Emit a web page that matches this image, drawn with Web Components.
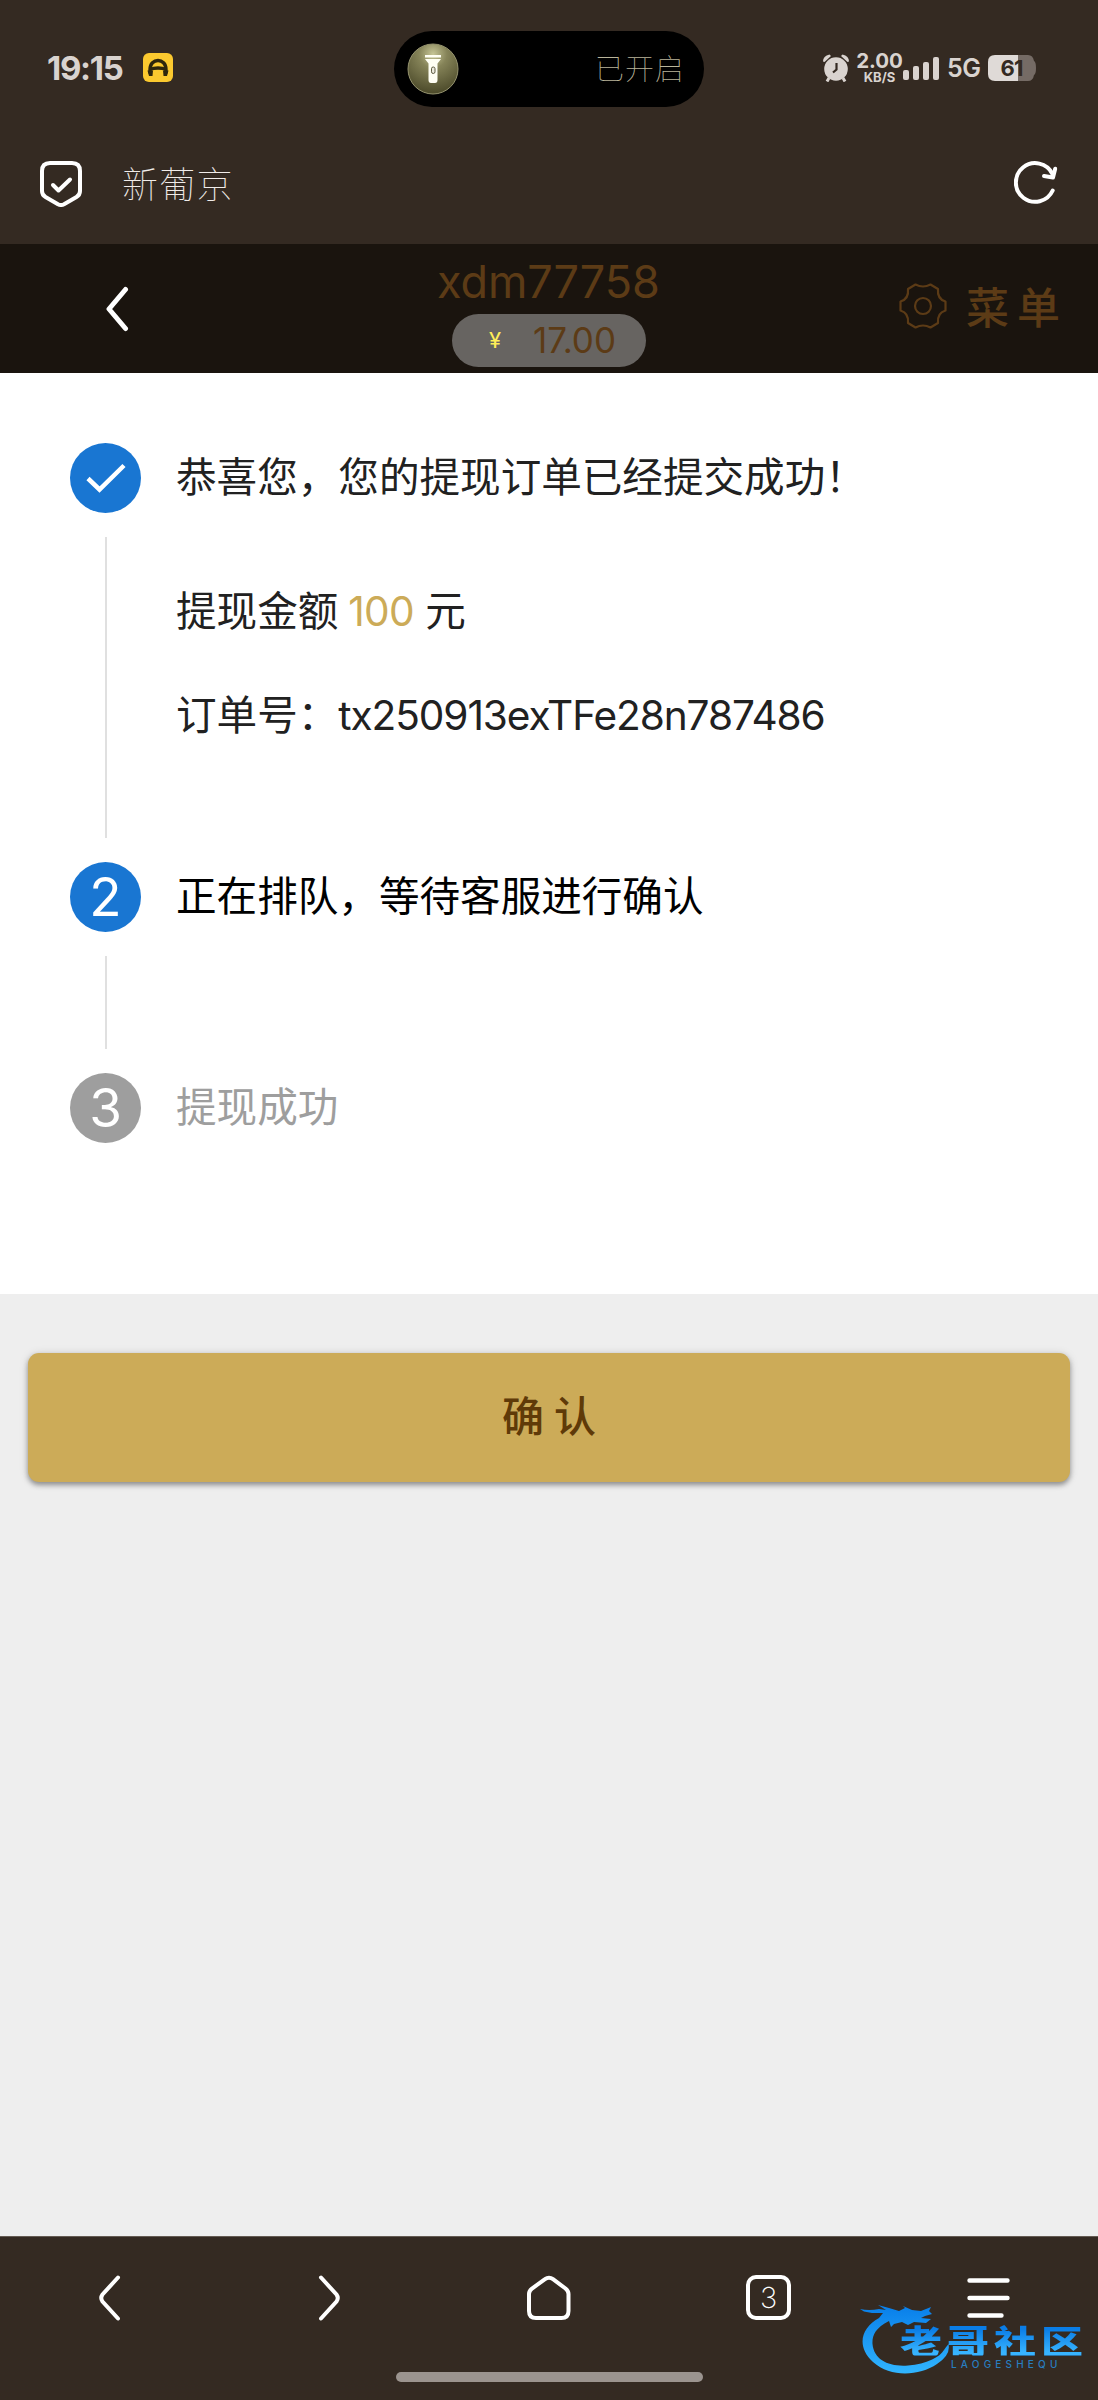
<!DOCTYPE html>
<html lang="zh-CN">
<head>
<meta charset="utf-8">
<title>提现订单</title>
<style>
html,body{margin:0;padding:0}
body{width:1098px;height:2400px;overflow:hidden;background:#eee;font-family:Inter,"Noto Sans CJK SC",sans-serif}
</style>
</head>
<body>
<app-screen></app-screen>
<script>
function define(name, html){
  const t=document.createElement('template');
  t.innerHTML=html;
  customElements.define(name, class extends HTMLElement{
    constructor(){super();this.attachShadow({mode:'open'}).append(t.content.cloneNode(true));}
  });
}

define('status-bar', `<style>
:host{display:flex;height:138px;box-sizing:border-box;padding:0 61px 0 47px;align-items:flex-start;color:#d9d3cf}
svg{display:block;flex:none}
.left{display:flex;align-items:center;width:347px;height:76px;margin-top:30px;gap:19px}
.time{font-size:33px;font-weight:700;letter-spacing:-1.3px;line-height:40px;width:77px;white-space:nowrap}
.island{margin-top:31px;width:310px;height:76px;border-radius:38px;background:#000;display:flex;align-items:center;justify-content:space-between;padding:0 19px 0 13px;box-sizing:border-box}
.island span{font:100 29px/40px "Noto Sans CJK SC",sans-serif;letter-spacing:1px;color:#b9b49a;padding-bottom:4px}
.right{display:flex;align-items:center;margin-left:auto;height:76px;margin-top:30px}
.speed{display:flex;flex-direction:column;align-items:center;margin:-1px 2px 0 8px;width:43px}
.speed b{font-size:20.500px;line-height:18px;letter-spacing:-.1px;font-weight:700}
.speed i{font-style:normal;font-weight:700;font-size:13px;line-height:14px}
.net{font-size:25px;font-weight:600;line-height:30px;margin:0 6px 0 7px;width:35px;letter-spacing:-.4px}
.bat{width:49px;height:26px;display:grid}
.bat>*{grid-area:1/1}
.bat span{font-size:22px;font-weight:700;line-height:26px;color:#342a22;text-align:center;letter-spacing:-1px;width:47px}
</style>
<div class="left"><span class="time">19:15</span>
<svg width="30" height="30" viewBox="0 0 30 30"><rect width="30" height="29" rx="6" fill="#fbc92f"/><path d="M7 20.500V16.500C7 4.500 23 4.500 23 16.500V20.500" fill="none" stroke="#2e260d" stroke-width="3.400"/><path d="M6.500 16.500Q15 13.500 23.500 16.500" fill="none" stroke="#2e260d" stroke-width="3.400"/><path d="M4.500 17.500h5.500l-.5 5.500H6zM20 17.500h5.500L24 23h-3.500z" fill="#2e260d"/></svg></div>
<div class="island"><svg width="52" height="52" viewBox="0 0 52 52"><defs><radialGradient id="g" cx=".5" cy=".2" r=".8"><stop offset="0" stop-color="#c6c596"/><stop offset=".35" stop-color="#858358"/><stop offset="1" stop-color="#4b4929"/></radialGradient></defs><circle cx="26" cy="26" r="25" fill="url(#g)" stroke="#96946f" stroke-width="1"/><path d="M18 12h16v2.500H18zM18 16h16l-3.500 4.500V37q0 3-2.500 3h-4q-2.500 0-2.500-3V20.500z" fill="#fffff4"/><rect x="24.500" y="24" width="3.500" height="6.500" rx="1.700" fill="#eceadd" stroke="#5d5b40"/></svg><span>已开启</span></div>
<div class="right">
<svg width="28" height="28" viewBox="0 0 28 28"><g fill="#d9d3cf"><circle cx="14" cy="15" r="11.800"/><path d="M1 7.500Q1 2 7.500 .5L9 2 2.500 8zM27 7.500Q27 2 20.500 .5L19 2l6.500 6z"/></g><path d="M7 24l-2 3.500M21 24l2 3.500" stroke="#d9d3cf" stroke-width="3"/><path d="M14.500 9v6.500L11 18.500" stroke="#342a22" stroke-width="2.200" fill="none"/></svg>
<span class="speed"><b>2.00</b><i>KB/S</i></span>
<svg width="37" height="23" viewBox="0 0 37 23" fill="#d9d3cf"><rect y="13" width="6" height="10" rx="2"/><rect x="10" y="9" width="6" height="14" rx="2"/><rect x="20" y="5" width="6" height="18" rx="2"/><rect x="30" width="6" height="23" rx="2"/></svg>
<span class="net">5G</span>
<div class="bat"><svg width="49" height="26" viewBox="0 0 49 26"><path d="M30 0h10q5 0 6 6 2 1 2 7t-2 7q-1 6-6 6H30z" fill="#756b65"/><path d="M7 0h23v26H7q-7 0-7-7V7q0-7 7-7z" fill="#dfdad7"/></svg><span>61</span></div>
</div>`);

define('address-bar', `<style>
:host{display:flex;height:106px;align-items:center;padding:0 40px 16px 39px;box-sizing:border-box}
svg{display:block;flex:none}
span{font:100 36px/50px "Noto Sans CJK SC",sans-serif;letter-spacing:1.200px;color:#f1ece9;margin:0 auto 0 39px;padding-bottom:2px}
</style>
<svg width="44" height="48" viewBox="0 0 44 48" fill="none" stroke="#fff" stroke-width="4" stroke-linecap="round" stroke-linejoin="round"><path d="M11 4h22q8 0 8 8v20q0 4-3.500 6l-12.500 7.200q-3 1.600-6 0L6.500 38Q3 36 3 32V12q0-8 8-8z"/><path d="M14 26l5.500 5.500L31 20.500"/></svg>
<span>新葡京</span>
<svg width="44" height="46" viewBox="0 0 44 46" fill="none" stroke="#fff" stroke-width="4" stroke-linecap="round" stroke-linejoin="round"><path d="M38.700 30.500A19.300 19.300 0 1 1 38.500 14"/><path d="M41.200 8.800L39 17.500 30 16"/></svg>`);

define('site-header', `<style>
:host{display:grid;grid-template-columns:1fr 300px 1fr;height:129px;background:#1a140e;color:#5c3b16}
svg{display:block;flex:none}
.back{padding:42px 0 0 104px}
.user{display:flex;flex-direction:column;align-items:center;padding-top:10px}
.name{font:400 45px/56px Inter,sans-serif;letter-spacing:-.1px;height:60px;width:224px;white-space:nowrap}
.pill{display:flex;align-items:center;width:194px;height:53px;border-radius:27px;background:#676461;box-sizing:border-box;padding:0 0 1px 37px}
.pill i{font:400 22px/30px Inter,sans-serif;color:#ffee58;width:44px}
.pill b{font:400 35px/50px Inter,sans-serif;letter-spacing:0}
.menu{display:flex;align-items:center;padding:0 0 5px 200px}
.menu span{font:500 43px/60px "Noto Sans CJK SC",sans-serif;letter-spacing:8px;margin-left:19px;white-space:nowrap;padding-bottom:3px}
</style>
<div class="back"><svg width="26" height="46" viewBox="0 0 26 46"><path d="M21.500 3.500L5 23l16.500 19.500" fill="none" stroke="#fff" stroke-width="5" stroke-linecap="round" stroke-linejoin="round"/></svg></div>
<div class="user"><span class="name">xdm77758</span><div class="pill"><i>¥</i><b>17.00</b></div></div>
<div class="menu"><svg width="48" height="48" viewBox="0 0 48 48" fill="none" stroke="#5c3b16" stroke-width="2.200" stroke-linejoin="round"><circle cx="24" cy="24" r="8"/><path d="M16.500 2.500Q24 6.500 31.500 2.500L39 7Q38 17 46.500 19.500V28.500Q38 31 39 41L31.500 45.500Q24 41.500 16.500 45.500L9 41Q10 31 1.500 28.500V19.500Q10 17 9 7z"/></svg><span>菜单</span></div>`);

define('step-item', `<style>
:host{display:grid;grid-template-columns:71px 1fr;column-gap:35px;font-size:40.600px;line-height:70px;color:var(--label,#212121)}
.rail{display:flex;flex-direction:column;align-items:center}
.dot{width:71px;height:70px;border-radius:50%;background:var(--dot,#1976d2);color:#fff;font-size:53px;line-height:70px;text-align:center;flex:none}
.line{width:2.500px;margin:24px 0 0 1px;height:var(--line,0);background:#e0e0e0}
.body{display:flex;flex-direction:column}
::slotted(svg){display:block}
</style>
<div class="rail"><div class="dot"><slot name="mark"></slot></div><div class="line"></div></div>
<div class="body"><slot name="label"></slot><slot></slot></div>`);

define('order-steps', `<style>
:host{display:flex;flex-direction:column;height:921px;background:#fff;box-sizing:border-box;padding:70px 0 0 70px}
step-item{white-space:nowrap}
.a{--line:301px;height:418.500px}
.b{--line:93px;--label:#000;height:211px}
.c{--dot:#9e9e9e;--label:#9e9e9e}
.amount{margin-top:64px}
em{font-style:normal;color:#ccab58;letter-spacing:-.7px;margin-left:-1.500px}
.order{margin-top:34px}
.order span{letter-spacing:-1.080px}
</style>
<step-item class="a"><svg slot="mark" width="70" height="70" viewBox="0 0 70 70"><path d="M18 35.500L29.500 46.500L54 22.500" fill="none" stroke="#fff" stroke-width="4.500"/></svg>
<span slot="label">恭喜您，您的提现订单已经提交成功！</span>
<div class="amount">提现金额 <em>100</em> 元</div>
<div class="order">订单号：<span>tx250913exTFe28n787486</span></div></step-item>
<step-item class="b"><span slot="mark">2</span><span slot="label">正在排队，等待客服进行确认</span></step-item>
<step-item class="c"><span slot="mark">3</span><span slot="label">提现成功</span></step-item>`);

define('confirm-button', `<style>
:host{display:block;padding:59px 28px 0}
button{display:block;width:100%;height:129px;border:0;padding:0 0 7px 10px;border-radius:11px;background:#ccab58;color:#5f3a08;font:500 42px/60px "Noto Sans CJK SC",sans-serif;letter-spacing:10px;box-shadow:0 3px 5px rgba(0,0,0,.34),0 1px 10px rgba(0,0,0,.14)}
</style><button><slot></slot></button>`);

define('site-watermark', `<style>
:host{display:flex;width:226px;height:76px}
svg{display:block;flex:none;width:100px;margin-right:-60px}
div{display:flex;flex-direction:column;padding-top:15px}
b{font:900 42px/40px "Noto Sans CJK SC",sans-serif;letter-spacing:5px;white-space:nowrap;height:40px;transform:scaleY(.78);transform-origin:0 50%;background:linear-gradient(#0a7de6 15%,#38b4ff 90%);-webkit-background-clip:text;background-clip:text;color:transparent}
i{font:500 10px/10px Inter,sans-serif;letter-spacing:4.200px;color:#287ec0;margin:-2px 0 0 51px;padding-top:1px;white-space:nowrap}
</style>
<svg height="76" viewBox="0 0 100 76"><defs><linearGradient id="w" x1="0" y1="0" x2="0" y2="1"><stop stop-color="#087ee9"/><stop offset="1" stop-color="#31b5ff"/></linearGradient></defs><path fill="url(#w)" d="M0 4Q9 6 19 4L26 5 18 0 29 3 39 6 45 3 43 1 52 5 61 6 71 2 69 6 72 9 65 11 61 13 71 14 66 18 54 17 48 20 42 17 34 19 31 22 29 16C15 23 12 31 12.500 39C14 55 29 62 48 60.500C67 59 80 52 84 45Q86 42 88.500 39Q91 50 77 59C59 71 31 73 13 57C-4 41 1 23 19 13L23 8 12 8 4 6.500z"/></svg>
<div><b>老哥社区</b><i>LAOGESHEQU</i></div>`);

define('browser-bar', `<style>
:host{display:flex;flex-direction:column;align-items:center;height:164px;box-sizing:border-box;background:#342a22;border-top:1px solid #655b53}
nav{display:grid;grid-template-columns:repeat(5,219.600px);width:1098px;height:123px;padding-top:37px;box-sizing:border-box;justify-items:center;align-items:start}
svg{display:block}
.tab{width:45px;height:45px;margin-top:1px;border:4px solid #fff;border-radius:10px;box-sizing:border-box;color:#fff;font:200 29px/37px Inter,sans-serif;text-align:center}
.handle{width:307px;height:10px;margin-top:12px;border-radius:5px;background:#9b948f}
</style>
<nav>
<svg width="48" height="48" viewBox="0 0 48 48"><path d="M32 3.500L16.500 20.500q-2.500 3.500 0 7L32 44.500" fill="none" stroke="#fff" stroke-width="4" stroke-linecap="round"/></svg>
<svg width="48" height="48" viewBox="0 0 48 48"><path d="M16 3.500L31.500 20.500q2.500 3.500 0 7L16 44.500" fill="none" stroke="#fff" stroke-width="4" stroke-linecap="round"/></svg>
<svg width="48" height="48" viewBox="0 0 48 48"><path d="M20 5.200Q24 2.200 28 5.200L40.500 14.500Q43.500 17 43.500 20V37q0 7-7 7H11q-7 0-7-7V20q0-3 3-5.500z" fill="none" stroke="#fff" stroke-width="4"/></svg>
<div class="tab">3</div>
<svg width="48" height="48" viewBox="0 0 48 48"><path d="M5.500 6.500h38M5.500 24h38M5.500 41.500h32" stroke="#fff" stroke-width="4.400" stroke-linecap="round"/></svg>
</nav><div class="handle"></div>`);

define('app-screen', `<style>
:host{display:flex;flex-direction:column;position:relative;width:1098px;height:2400px;background:#eee}
.top{background:#342a22}
main{flex:1}
site-watermark{position:absolute;left:860px;top:2305px}
</style>
<div class="top"><status-bar></status-bar><address-bar></address-bar></div>
<site-header></site-header>
<main><order-steps></order-steps><confirm-button>确认</confirm-button></main>
<browser-bar></browser-bar>
<site-watermark></site-watermark>`);
</script>
</body>
</html>
